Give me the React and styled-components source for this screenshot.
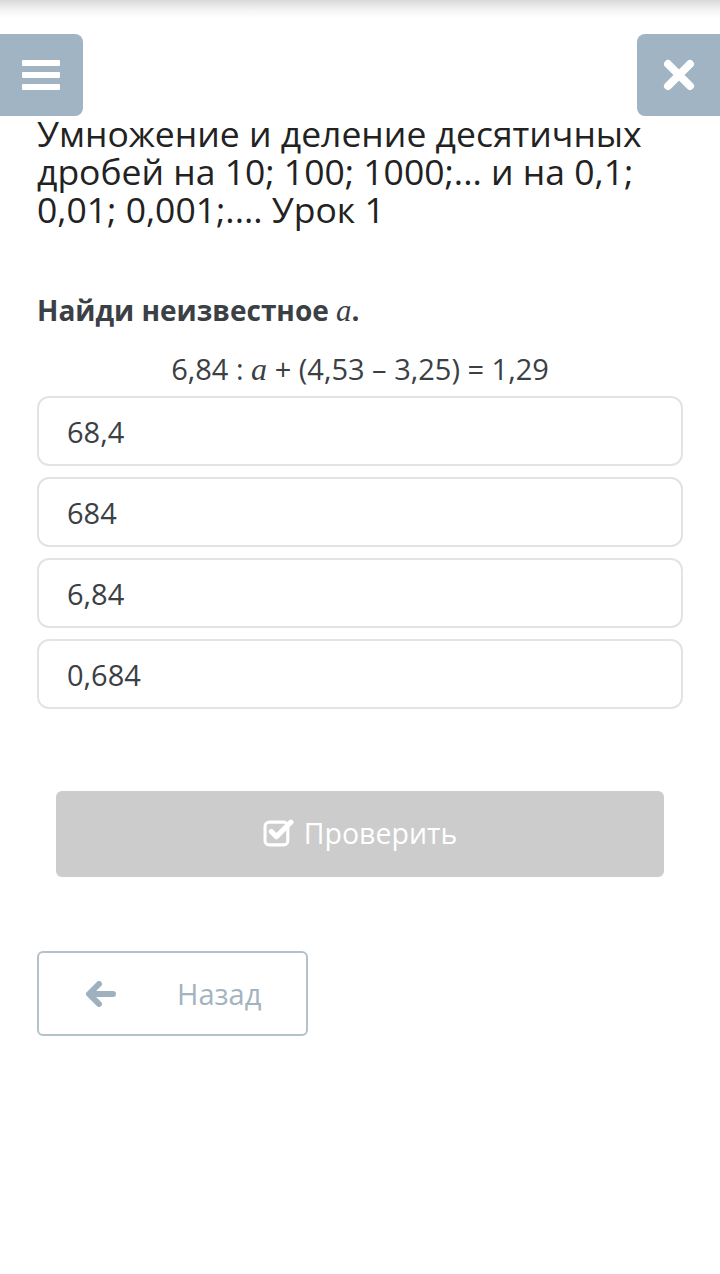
import React from 'react';
import styled, { createGlobalStyle } from 'styled-components';

const GlobalStyle = createGlobalStyle`
  body {
    margin: 0;
    background: #fff;
    font-family: "Open Sans", "Noto Sans", sans-serif;
  }
`;

const Page = styled.div`
  position: relative;
  min-height: 1274px;
  background: linear-gradient(to bottom, #d9d9d9 0px, #f4f4f4 10px, #fff 18px);
  padding: 34px 0 0;
  box-sizing: border-box;
`;

const TopBar = styled.div`
  display: flex;
  justify-content: space-between;
  height: 82px;
`;

const SideBtn = styled.button`
  width: 83px;
  height: 82px;
  border: none;
  padding: 0;
  background: #a0b4c3;
  border-radius: ${(p) => (p.$right ? '8px 0 0 8px' : '0 8px 8px 0')};
  display: flex;
  align-items: center;
  justify-content: center;
`;

const Burger = styled.div`
  display: flex;
  flex-direction: column;
  gap: 6px;
  width: 38px;
  margin-right: 2px;
  span {
    display: block;
    height: 6px;
    background: #fff;
    border-radius: 1px;
  }
`;

const Content = styled.div`
  padding: 0 37px;
`;

const Title = styled.h1`
  margin: -2px 0 0;
  font-size: 35.5px;
  line-height: 38px;
  font-weight: 400;
  color: #222;
`;

const Question = styled.div`
  margin-top: 63px;
  font-size: 28px;
  line-height: 38px;
  font-weight: 700;
  color: #3b4045;
  i {
    font-family: "Liberation Serif", serif;
    font-weight: 400;
    font-size: 31px;
  }
`;

const Equation = styled.div`
  margin-top: 19px;
  text-align: center;
  font-size: 29px;
  line-height: 40px;
  color: #3b4045;
  i {
    font-family: "Liberation Serif", serif;
    font-size: 32px;
  }
`;

const Options = styled.div`
  margin-top: 7px;
  display: flex;
  flex-direction: column;
  gap: 11px;
`;

const Option = styled.div`
  height: 70px;
  box-sizing: border-box;
  border: 2px solid #e3e3e3;
  border-radius: 12px;
  display: flex;
  align-items: center;
  padding-left: 28px;
  font-size: 29px;
  color: #3b4045;
`;

const CheckBtn = styled.button`
  display: flex;
  align-items: center;
  justify-content: center;
  gap: 10px;
  margin: 82px 19px 0;
  width: calc(100% - 38px);
  height: 86px;
  border: none;
  border-radius: 6px;
  background: #cccccc;
  color: #fff;
  font-family: inherit;
  font-size: 28.5px;
  padding-bottom: 4px;
`;

const BackBtn = styled.button`
  margin-top: 74px;
  width: 271px;
  height: 85px;
  box-sizing: border-box;
  border: 2px solid #b3c1cb;
  border-radius: 6px;
  background: #fff;
  display: flex;
  align-items: center;
  padding: 0 0 0 47px;
  font-family: inherit;
  font-size: 29px;
  color: #a3b3bf;
  span {
    margin-left: 61px;
  }
`;

const options = ['68,4', '684', '6,84', '0,684'];

const App = () => (
  <Page>
    <GlobalStyle />
    <TopBar>
      <SideBtn>
        <Burger>
          <span />
          <span />
          <span />
        </Burger>
      </SideBtn>
      <SideBtn $right>
        <svg width="34" height="34" viewBox="0 0 34 34">
          <path d="M6 6 L28 28 M28 6 L6 28" stroke="#fff" strokeWidth="8" strokeLinecap="round" />
        </svg>
      </SideBtn>
    </TopBar>
    <Content>
      <Title>Умножение и деление десятичных дробей на 10; 100; 1000;... и на 0,1; 0,01; 0,001;.... Урок 1</Title>
      <Question>
        Найди неизвестное <i>a</i>.
      </Question>
      <Equation>
        6,84 : <i>a</i> + (4,53 – 3,25) = 1,29
      </Equation>
      <Options>
        {options.map((o) => <Option key={o}>{o}</Option>)}
      </Options>
      <CheckBtn>
        <svg width="31" height="29" viewBox="0 0 30 28">
          <rect x="2" y="4" width="22" height="22" rx="4" fill="none" stroke="#fff" strokeWidth="3" />
          <path d="M8 13 L13 18 L27 4" fill="none" stroke="#fff" strokeWidth="5" strokeLinecap="round" strokeLinejoin="round" />
        </svg>
        Проверить
      </CheckBtn>
      <BackBtn>
        <svg width="30" height="26" viewBox="0 0 30 26">
          <path d="M13 3 L3 13 L13 23 M4 13 L27 13" fill="none" stroke="#9fb1be" strokeWidth="6" strokeLinecap="round" strokeLinejoin="round" />
        </svg>
        <span>Назад</span>
      </BackBtn>
    </Content>
  </Page>
);

export default App;
